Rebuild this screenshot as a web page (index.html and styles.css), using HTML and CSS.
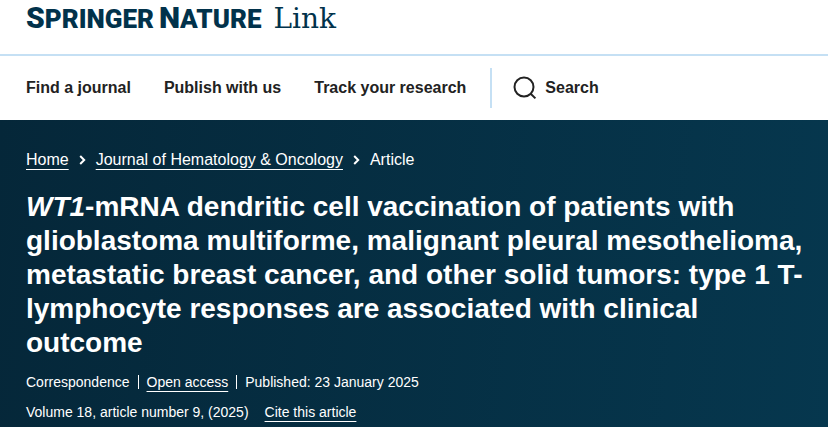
FILE: index.html
```html
<!DOCTYPE html>
<html lang="en">
<head>
<meta charset="utf-8">
<meta name="viewport" content="width=device-width, initial-scale=1">
<title>WT1-mRNA dendritic cell vaccination | Springer Nature Link</title>
<link rel="stylesheet" href="styles.css">
</head>
<body>
<header class="masthead">
  <a class="logo" href="#"><span class="logo-name"><span class="logo-cap">S</span>PRINGER</span><span class="logo-name"><span class="logo-cap">N</span>ATURE</span><span class="logo-link">Link</span></a>
</header>
<nav class="nav" aria-label="Main">
  <a class="nav-link" href="#">Find a journal</a>
  <a class="nav-link" href="#">Publish with us</a>
  <a class="nav-link" href="#">Track your research</a>
  <div class="nav-tools">
    <button class="search" type="button">
      <svg class="search-icon" viewBox="0 0 24 24" aria-hidden="true"><circle cx="11" cy="11" r="9.5"/><path d="M17.7 17.7 22.4 22.4"/></svg>
      Search
    </button>
  </div>
</nav>
<main class="hero">
  <nav aria-label="Breadcrumbs">
    <ol class="breadcrumbs">
      <li><a class="link" href="#">Home</a></li>
      <li><svg class="chevron" viewBox="0 0 7 10" aria-hidden="true"><path d="M1.2 1 5.2 5 1.2 9"/></svg><a class="link" href="#">Journal of Hematology &amp; Oncology</a></li>
      <li><svg class="chevron" viewBox="0 0 7 10" aria-hidden="true"><path d="M1.2 1 5.2 5 1.2 9"/></svg>Article</li>
    </ol>
  </nav>
  <h1 class="title"><i>WT1</i>-mRNA dendritic cell vaccination of patients with glioblastoma multiforme, malignant pleural mesothelioma, metastatic breast cancer, and other solid tumors: type 1 T-lymphocyte responses are associated with clinical outcome</h1>
  <ul class="meta">
    <li>Correspondence</li>
    <li><a class="link" href="#">Open access</a></li>
    <li>Published: <time datetime="2025-01-23">23 January 2025</time></li>
  </ul>
  <div class="volume"><span>Volume 18, article number 9, (2025)</span><a class="link" href="#">Cite this article</a></div>
</main>
</body>
</html>
```
FILE: styles.css
```css
* { box-sizing: border-box; }

body {
  margin: 0;
  background: #fff;
  color: #222;
  font-family: "Liberation Sans", Arial, sans-serif;
  font-size: 16px;
  line-height: 20px;
}

.masthead {
  padding: 0 26px 17px;
  border-bottom: 2px solid #c5e0f4;
}

.logo {
  display: flex;
  align-items: baseline;
  color: #01324b;
  font-size: 26px;
  line-height: 36px;
  text-decoration: none;
}

.logo-name {
  margin-right: 5px;
  font-family: Roboto, sans-serif;
  font-weight: 900;
}

.logo-cap { font-size: 30px; }

.logo-link {
  margin-left: 7px;
  font-family: "DejaVu Serif", serif;
  font-size: 28px;
}

.nav {
  display: flex;
  align-items: center;
  gap: 33px;
  padding: 12px 26px;
  font-weight: 700;
}

.nav-link {
  color: #222;
  text-decoration: none;
}

.nav-tools {
  display: flex;
  margin-left: -9px;
  padding-left: 21px;
  border-left: 2px solid #c5e0f4;
}

.search {
  display: flex;
  align-items: center;
  gap: 8px;
  height: 40px;
  padding: 0;
  border: 0;
  background: none;
  color: #222;
  font: inherit;
}

.search-icon {
  width: 24px;
  height: 24px;
  fill: none;
  stroke: #222;
  stroke-width: 2;
}

.hero {
  min-height: calc(100vh - 120px);
  padding: 30px 24px 4px 26px;
  background: linear-gradient(96deg, #052739, #06374e);
  color: #fff;
}

.breadcrumbs,
.meta {
  display: flex;
  flex-wrap: wrap;
  margin: 0;
  padding: 0;
  list-style: none;
}

.chevron {
  width: 7px;
  height: 10px;
  margin: 0 10px;
  fill: none;
  stroke: #fff;
  stroke-width: 2;
}

.link {
  color: inherit;
  text-decoration: underline;
  text-decoration-thickness: 1px;
  text-decoration-skip-ink: none;
  text-underline-offset: 4px;
}

.title {
  margin: 20px 0 12px;
  font-size: 28px;
  line-height: 34px;
}

.meta,
.volume {
  font-size: 14px;
  line-height: 20px;
}

.meta li + li::before {
  content: "";
  display: inline-block;
  width: 1px;
  height: 14px;
  margin: 0 8px;
  background: #fff;
  vertical-align: -2px;
}

.volume {
  display: flex;
  gap: 16px;
  margin-top: 10px;
}
```
